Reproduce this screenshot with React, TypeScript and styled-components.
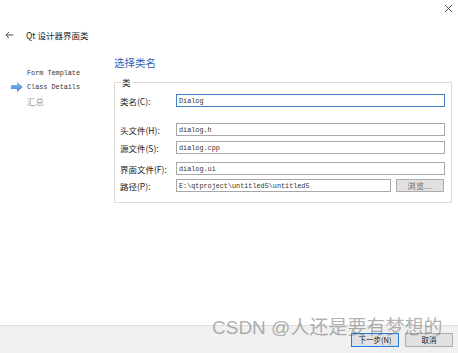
import React from "react";
import styled, { createGlobalStyle } from "styled-components";

const GlobalStyle = createGlobalStyle`
  html, body {
    margin: 0;
    padding: 0;
    background: #ffffff;
  }
  * {
    box-sizing: border-box;
  }
`;

const cjk = `"Noto Sans CJK SC", "Liberation Sans", sans-serif`;
const mono = `"Liberation Mono", "Noto Sans CJK SC", monospace`;

const Window = styled.div`
  position: relative;
  width: 458px;
  height: 353px;
  display: flex;
  flex-direction: column;
  background: #ffffff;
  font-family: ${cjk};
  color: #1a1a1a;
  overflow: hidden;
`;

const TopBar = styled.div`
  height: 20px;
  display: flex;
  justify-content: flex-end;
  align-items: center;
  padding-right: 5px;
  padding-bottom: 4px;
`;

const TitleRow = styled.div`
  height: 30px;
  display: flex;
  align-items: center;
  gap: 12px;
  padding-left: 5px;
  font-size: 8.5px;
  color: #222;
`;

const Body = styled.div`
  flex: 1;
  display: flex;
`;

const Nav = styled.ul`
  width: 113px;
  margin: 0;
  padding: 16px 0 0 0;
  list-style: none;
`;

const NavItem = styled.li<{ $disabled?: boolean }>`
  height: 14px;
  display: flex;
  align-items: center;
  font-family: ${(p) => (p.$disabled ? cjk : mono)};
  font-size: ${(p) => (p.$disabled ? "8.5px" : "6.8px")};
  color: ${(p) => (p.$disabled ? "#9a9a9a" : "#333")};
`;

const Marker = styled.span`
  width: 27px;
  display: flex;
  justify-content: flex-end;
  padding-right: 4px;
`;

const Content = styled.div`
  flex: 1;
  display: flex;
  flex-direction: column;
  padding: 6px 6px 0 1px;
`;

const Heading = styled.div`
  font-size: 10.5px;
  line-height: 14px;
  color: #2f5fb7;
  margin-bottom: 7px;
`;

const GroupBox = styled.fieldset`
  margin: 0;
  padding: 3px 5px 10px 5px;
  border: 1px solid #dcdcdc;
  display: flex;
  flex-direction: column;
`;

const Legend = styled.legend`
  padding: 0 1px;
  margin-left: 1px;
  font-size: 8.5px;
  line-height: 10px;
  color: #222;
`;

const Row = styled.div<{ $top: number }>`
  display: flex;
  align-items: center;
  margin-top: ${(p) => p.$top}px;
  gap: 4px;
`;

const Label = styled.span`
  width: 52px;
  flex-shrink: 0;
  font-size: 8.5px;
  color: #222;
  white-space: nowrap;
`;

const Field = styled.div<{ $focused?: boolean }>`
  flex: 1;
  height: 13px;
  border: 1px solid ${(p) => (p.$focused ? "#3d7fc0" : "#a8a8a8")};
  background: #fff;
  display: flex;
  align-items: center;
  padding-left: 2px;
  font-family: ${mono};
  font-size: 6.8px;
  color: #333;
  margin-right: 1px;
`;

const BrowseButton = styled.div`
  width: 48px;
  height: 13px;
  margin-right: 2px;
  border: 1px solid #adadad;
  background: #e1e1e1;
  display: flex;
  align-items: center;
  justify-content: center;
  font-size: 8px;
  color: #666;
  letter-spacing: 0.5px;
`;

const Footer = styled.div`
  height: 28px;
  flex-shrink: 0;
  background: #f0f0f0;
  border-top: 1px solid #dfdfdf;
  display: flex;
  justify-content: flex-end;
  align-items: center;
  gap: 6px;
  padding-right: 5px;
`;

const FooterButton = styled.div<{ $primary?: boolean }>`
  width: 48px;
  height: 14px;
  border: 1px solid ${(p) => (p.$primary ? "#2a7ad4" : "#adadad")};
  box-shadow: ${(p) => (p.$primary ? "inset 0 0 0 1px #cfe3f8" : "none")};
  background: #e1e1e1;
  display: flex;
  align-items: center;
  justify-content: center;
  font-size: 7.5px;
  color: #222;
`;

const Watermark = styled.div`
  position: absolute;
  left: 212px;
  top: 316px;
  font-family: "Liberation Sans", "Noto Sans CJK SC", sans-serif;
  font-size: 19px;
  line-height: 24px;
  color: rgba(110, 110, 110, 0.55);
  white-space: nowrap;
  pointer-events: none;
`;

const CloseIcon = () => (
  <svg width="9" height="9" viewBox="0 0 9 9">
    <path d="M1 1 L8 8 M8 1 L1 8" stroke="#555" strokeWidth="1" />
  </svg>
);

const BackIcon = () => (
  <svg width="9" height="8" viewBox="0 0 9 8">
    <path d="M8.5 4 H1.2 M4 1 L1 4 L4 7" stroke="#555" strokeWidth="1" fill="none" />
  </svg>
);

const CurrentArrow = () => (
  <svg width="12" height="10" viewBox="0 0 12 10">
    <defs>
      <linearGradient id="arr" x1="0" y1="0" x2="0" y2="1">
        <stop offset="0" stopColor="#8dbef0" />
        <stop offset="1" stopColor="#3f86d6" />
      </linearGradient>
    </defs>
    <path d="M0 3 H6 V0 L12 5 L6 10 V7 H0 Z" fill="url(#arr)" />
  </svg>
);

type FieldRow = { label: string; value: string; top: number };

const rows: FieldRow[] = [
  { label: "头文件(H):", value: "dialog.h", top: 16 },
  { label: "源文件(S):", value: "dialog.cpp", top: 5 },
  { label: "界面文件(F):", value: "dialog.ui", top: 8 },
];

export default function App() {
  return (
    <Window>
      <GlobalStyle />
      <TopBar>
        <CloseIcon />
      </TopBar>
      <TitleRow>
        <BackIcon />
        <span>Qt 设计器界面类</span>
      </TitleRow>
      <Body>
        <Nav>
          <NavItem>
            <Marker />
            Form Template
          </NavItem>
          <NavItem>
            <Marker>
              <CurrentArrow />
            </Marker>
            Class Details
          </NavItem>
          <NavItem $disabled>
            <Marker />
            汇总
          </NavItem>
        </Nav>
        <Content>
          <Heading>选择类名</Heading>
          <GroupBox>
            <Legend>类</Legend>
            <Row $top={4}>
              <Label>类名(C):</Label>
              <Field $focused>Dialog</Field>
            </Row>
            {rows.map((r) => (
              <Row key={r.label} $top={r.top}>
                <Label>{r.label}</Label>
                <Field>{r.value}</Field>
              </Row>
            ))}
            <Row $top={4}>
              <Label>路径(P):</Label>
              <Field>E:\qtproject\untitled5\untitled5</Field>
              <BrowseButton>浏览...</BrowseButton>
            </Row>
          </GroupBox>
        </Content>
      </Body>
      <Footer>
        <FooterButton $primary>下一步(N)</FooterButton>
        <FooterButton>取消</FooterButton>
      </Footer>
      <Watermark>CSDN @人还是要有梦想的</Watermark>
    </Window>
  );
}
